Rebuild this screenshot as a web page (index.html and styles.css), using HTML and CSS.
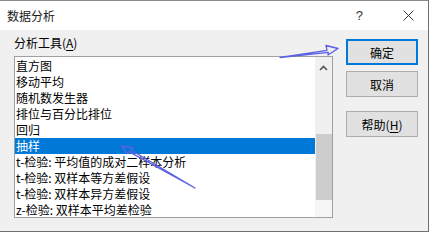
FILE: index.html
```html
<!DOCTYPE html>
<html lang="zh-CN">
<head>
<meta charset="utf-8">
<title>数据分析</title>
<link rel="stylesheet" href="styles.css">
</head>
<body>
<div class="window">
  <div class="titlebar">
    <span class="title">数据分析</span>
    <span class="help-q">?</span>
    <svg class="close-x" width="11" height="11" viewBox="0 0 11 11"><path d="M0.5 0.5 L10.5 10.5 M10.5 0.5 L0.5 10.5" stroke="#3a3a3a" stroke-width="1" fill="none"/></svg>
  </div>
  <div class="content">
    <div class="left">
      <div class="label">分析工具(<u>A</u>)</div>
      <div class="listbox">
        <div class="items">
          <div class="item">直方图</div>
          <div class="item">移动平均</div>
          <div class="item">随机数发生器</div>
          <div class="item">排位与百分比排位</div>
          <div class="item">回归</div>
          <div class="item selected">抽样</div>
          <div class="item">t-检验: 平均值的成对二样本分析</div>
          <div class="item">t-检验: 双样本等方差假设</div>
          <div class="item">t-检验: 双样本异方差假设</div>
          <div class="item">z-检验: 双样本平均差检验</div>
        </div>
        <div class="scrollbar">
          <div class="sb-btn">
            <svg width="9" height="6" viewBox="0 0 9 6"><path d="M1 5 L4.5 1.5 L8 5" stroke="#555" stroke-width="1.6" fill="none"/></svg>
          </div>
          <div class="sb-track"><div class="sb-thumb"></div></div>
          <div class="sb-fade"></div>
        </div>
      </div>
    </div>
    <div class="right">
      <div class="btn default">确定</div>
      <div class="btn">取消</div>
      <div class="btn help">帮助(<u>H</u>)</div>
    </div>
  </div>
  <svg class="annot" width="431" height="233" viewBox="0 0 431 233">
    <path d="M280 57.5 L327 50.3 L326 45.5 L338 48.5 L328 55 L328.3 52.3 Z" fill="none" stroke="#5d61e3" stroke-width="1.3" stroke-linejoin="round"/>
    <path d="M195 188 L131 150 L133 148 L121.5 146 L127 153.5 L129 151.6 Z" fill="none" stroke="#5d61e3" stroke-width="1.3" stroke-linejoin="round"/>
  </svg>
</div>
</body>
</html>
```
FILE: styles.css
```css
* { box-sizing: border-box; }
html, body { margin: 0; padding: 0; background: #ffffff; }
body {
  font-family: "Noto Sans CJK SC", "Noto Sans", sans-serif;
  font-size: 12px;
  color: #000;
}
.window {
  position: relative;
  width: 429px;
  height: 232px;
  background: #f0f0f0;
  border-right: 1px solid #6f6f6f;
  border-bottom: 1px solid #6f6f6f;
  border-top: 1px solid #8a8a8a;
  display: flex;
  flex-direction: column;
}
.titlebar {
  height: 29px;
  background: #ffffff;
  display: flex;
  align-items: center;
  padding-left: 7px;
  flex-shrink: 0;
}
.title { font-size: 12px; line-height: 16px; flex: 1; color: #1a1a1a; }
.help-q {
  font-family: "Liberation Sans", sans-serif;
  font-size: 13px;
  color: #333;
  margin-right: 40px;
}
.close-x { margin-right: 14px; }
.content {
  display: flex;
  gap: 13px;
  padding: 5px 10px 0 14px;
}
.left { width: 319px; display: flex; flex-direction: column; }
.label { line-height: 16px; height: 16px; }
.label u, .btn u { text-decoration-thickness: 1px; text-underline-offset: 2px; }
.listbox {
  margin-top: 5px;
  height: 162px;
  border: 1px solid #a0a0a0;
  background: #fff;
  display: flex;
  overflow: hidden;
}
.items { flex: 1; padding-top: 1px; overflow: hidden; }
.item {
  height: 16px;
  line-height: 16px;
  padding-left: 1px;
  white-space: nowrap;
}
.item.selected { background: #0078d7; color: #fff; }
.scrollbar {
  width: 17px;
  background: #f0f0f0;
  display: flex;
  flex-direction: column;
}
.sb-btn {
  height: 17px;
  display: flex;
  align-items: center;
  justify-content: center;
  padding-top: 4px;
}
.sb-track { height: 126px; padding-top: 60px; padding-left: 1px; }
.sb-thumb { height: 66px; background: #cdcdcd; }
.sb-fade { flex: 1; background: #f6f6f6; }
.right { width: 72px; display: flex; flex-direction: column; padding-top: 4px; }
.btn {
  height: 26px;
  background: #e1e1e1;
  border: 1px solid #adadad;
  display: flex;
  align-items: center;
  justify-content: center;
  margin-bottom: 6px;
  font-size: 12px;
}
.btn.default { border: 2px solid #0078d7; }
.btn.help { margin-top: 8px; }
.annot { position: absolute; left: 0; top: -1px; pointer-events: none; }
```
